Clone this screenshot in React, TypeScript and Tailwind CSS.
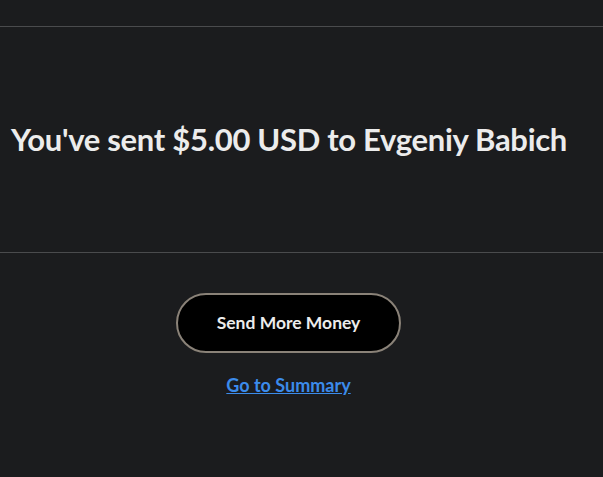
export default function App() {
  return (
    <div
      className="h-[477px] w-full overflow-hidden bg-[#1b1c1e] text-[#ececec]"
      style={{ fontFamily: "Lato, 'Open Sans', sans-serif" }}
    >
      <div className="h-[26px]"></div>
      <div className="h-px bg-[#4a4b4d]"></div>
      <div className="flex h-[225px] items-center px-[11px]">
        <h1 className="-mt-px text-[31px] font-bold tracking-[-0.3px]">
          You've sent $5.00 USD to Evgeniy Babich
        </h1>
      </div>
      <div className="h-px bg-[#4a4b4d]"></div>
      <div className="flex w-[577px] flex-col items-center pt-[40px]">
        <button
          type="button"
          className="h-[60px] w-[225px] rounded-full border-2 border-[#8a8278] bg-black text-[17.5px] font-bold text-[#ececec]"
        >
          Send More Money
        </button>
        <a
          href="#"
          className="mt-[19px] text-[18px] font-bold text-[#3b8beb] underline"
        >
          Go to Summary
        </a>
      </div>
    </div>
  );
}
